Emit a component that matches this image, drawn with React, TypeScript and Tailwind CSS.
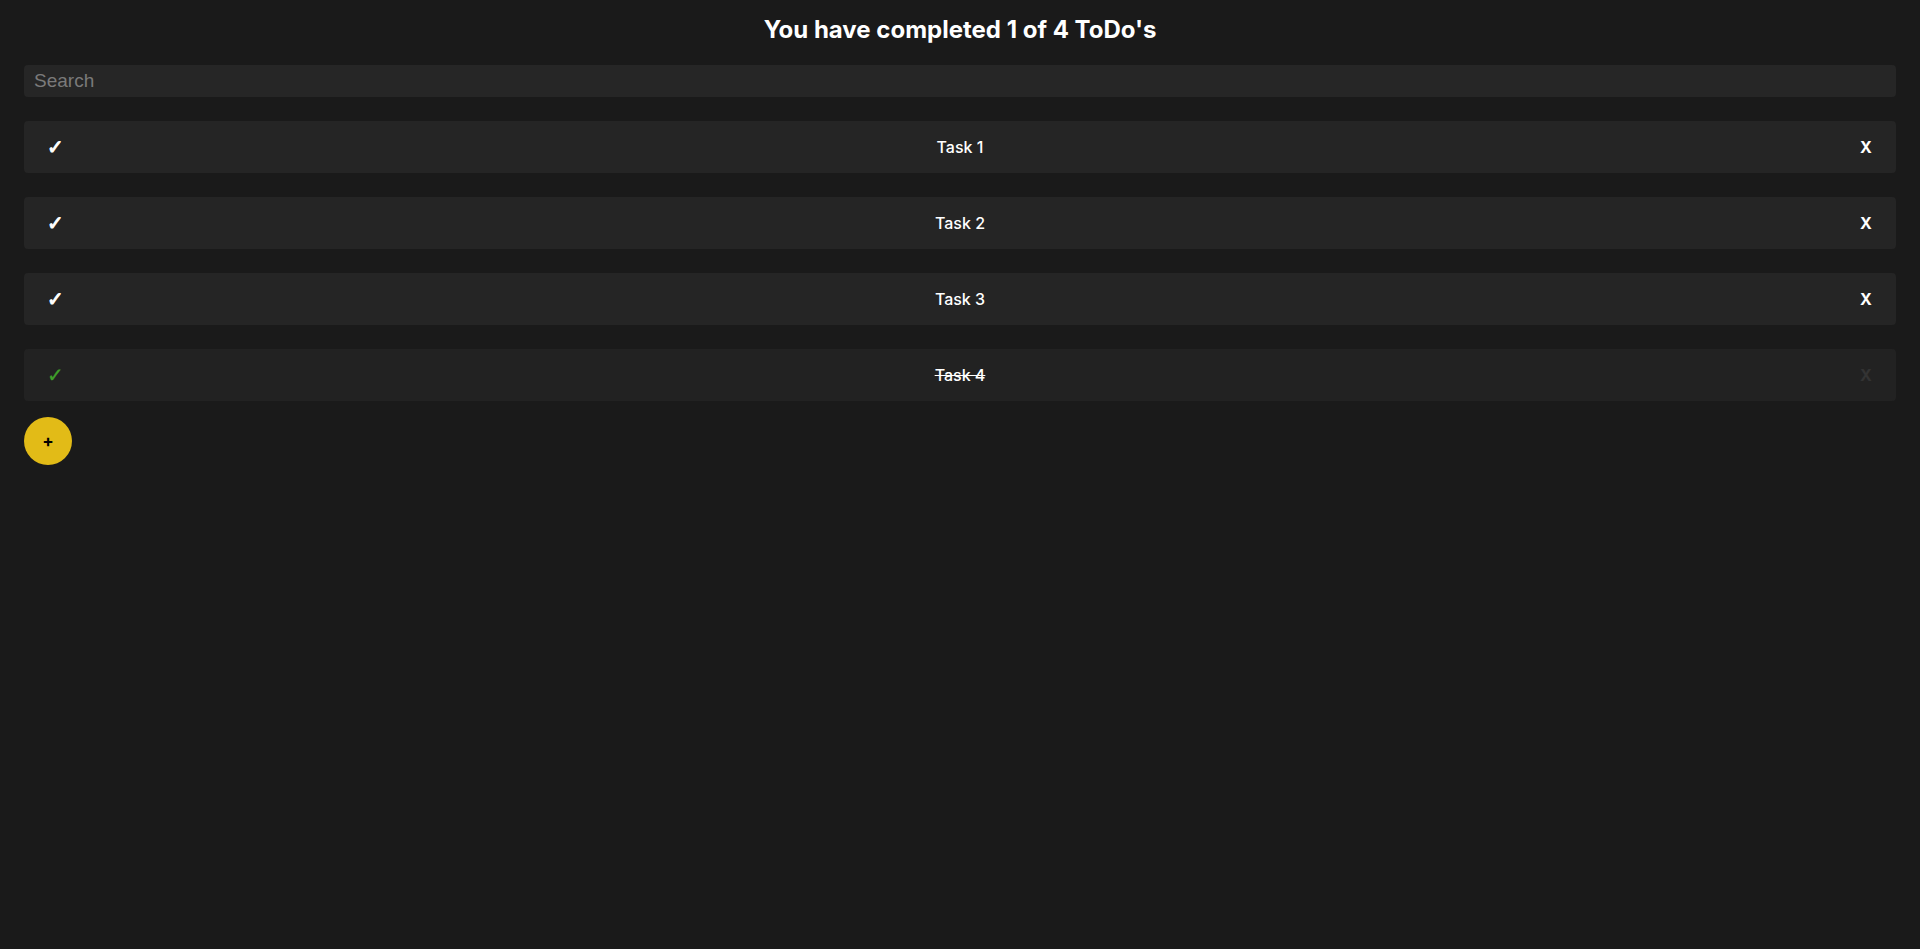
import React from "react";

const tasks = [
  { name: "Task 1", done: false },
  { name: "Task 2", done: false },
  { name: "Task 3", done: false },
  { name: "Task 4", done: true },
];

export default function App() {
  return (
    <div
      className="min-h-[949px] w-full bg-[#1a1a1a] px-6 pt-[14px]"
      style={{ fontFamily: "Inter, 'Noto Sans', sans-serif" }}
    >
      <h1 className="text-center text-[24px] font-bold leading-8 text-white">
        You have completed 1 of 4 ToDo's
      </h1>
      <input
        className="mt-[19px] block h-8 w-full rounded-[4px] bg-[#262626] pl-[10px] text-[19px] text-[#7a7a7a] placeholder-[#7a7a7a] outline-none"
        style={{ fontFamily: "'Liberation Sans', Arial, sans-serif" }}
        placeholder="Search"
      />
      <ul className="mt-6 flex flex-col gap-6">
        {tasks.map((t) => (
          <li
            key={t.name}
            className={`grid h-[52px] grid-cols-[12px_1fr_12px] items-center rounded-[4px] px-6 ${
              t.done ? "bg-[#222222]" : "bg-[#252525]"
            }`}
          >
            <span
              className={`-ml-[1px] text-[20px] leading-none ${
                t.done
                  ? "font-normal text-[#3f9f2a] [-webkit-text-stroke:0.3px_#3f9f2a]"
                  : "font-bold text-white [-webkit-text-stroke:0.9px_white]"
              }`}
              style={{ fontFamily: "'DejaVu Sans', sans-serif" }}
            >
              ✓
            </span>
            <span
              className={`text-center text-[16px] font-medium text-white ${
                t.done ? "line-through" : ""
              }`}
            >
              {t.name}
            </span>
            <span
              className={`text-center text-[16px] font-bold ${
                t.done ? "text-[#333333]" : "text-white"
              }`}
            >
              X
            </span>
          </li>
        ))}
      </ul>
      <button className="mt-4 flex h-12 w-12 items-center justify-center rounded-full bg-[#e2bb17] text-[17px] font-bold leading-none text-black">
        +
      </button>
    </div>
  );
}
